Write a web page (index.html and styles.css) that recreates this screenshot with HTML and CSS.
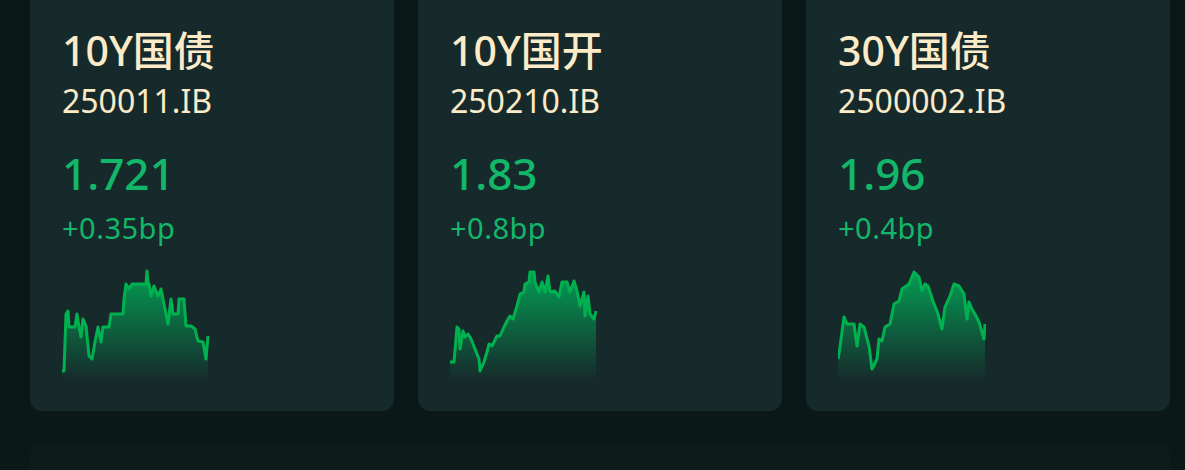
FILE: index.html
```html
<!DOCTYPE html>
<html lang="zh">
<head>
  <meta charset="UTF-8">
  <title>债券行情</title>
  <meta name="viewport" content="width=device-width, initial-scale=1.0">
  <link rel="stylesheet" href="styles.css">
</head>
<body>
  <div class="page">
    <div class="cards">
      <div class="card">
        <div class="name">10Y国债</div>
        <div class="code">250011.IB</div>
        <div class="yield">1.721</div>
        <div class="change">+0.35bp</div>
        <svg class="spark" width="148" height="112" viewBox="0 0 148 112">
          <defs>
            <linearGradient id="fill1" x1="0" y1="0" x2="0" y2="1">
              <stop offset="0" stop-color="#00b15a" stop-opacity="0.85"/>
              <stop offset="1" stop-color="#00b15a" stop-opacity="0"/>
            </linearGradient>
          </defs>
          <path fill="url(#fill1)" d="M0,102 L2,102 4,45 6,42 7,58 13,58 15,45 17,58 19,68 21,50 24,57 27,87 30,90 33,73 36,58 39,73 41,58 47,58 49,45 61,45 62,30 64,15 67,20 70,15 84,15 85,2 86,15 87,15 89,27 92,17 96,27 99,20 101,30 106,55 109,30 111,45 116,45 117,30 122,30 124,57 129,57 133,60 136,72 141,73 144,90 146,67 L146,112 L0,112 Z"/>
          <polyline class="line" points="0,102 2,102 4,45 6,42 7,58 13,58 15,45 17,58 19,68 21,50 24,57 27,87 30,90 33,73 36,58 39,73 41,58 47,58 49,45 61,45 62,30 64,15 67,20 70,15 84,15 85,2 86,15 87,15 89,27 92,17 96,27 99,20 101,30 106,55 109,30 111,45 116,45 117,30 122,30 124,57 129,57 133,60 136,72 141,73 144,90 146,67"/>
        </svg>
      </div>

      <div class="card">
        <div class="name">10Y国开</div>
        <div class="code">250210.IB</div>
        <div class="yield">1.83</div>
        <div class="change">+0.8bp</div>
        <svg class="spark" width="148" height="112" viewBox="0 0 148 112">
          <defs>
            <linearGradient id="fill2" x1="0" y1="0" x2="0" y2="1">
              <stop offset="0" stop-color="#00b15a" stop-opacity="0.85"/>
              <stop offset="1" stop-color="#00b15a" stop-opacity="0"/>
            </linearGradient>
          </defs>
          <path fill="url(#fill2)" d="M0,93 L4,93 7,58 9,60 10,80 13,62 15,68 18,65 21,70 25,80 29,90 30,102 34,93 37,83 39,75 42,77 47,67 50,67 54,58 57,52 60,47 63,50 67,37 70,25 74,23 75,15 79,13 80,3 84,3 85,13 89,23 92,13 95,23 98,7 100,23 105,22 109,28 112,13 117,13 120,23 124,12 127,22 130,37 134,23 135,47 138,27 140,45 144,50 146,42 L146,112 L0,112 Z"/>
          <polyline class="line" points="0,93 4,93 7,58 9,60 10,80 13,62 15,68 18,65 21,70 25,80 29,90 30,102 34,93 37,83 39,75 42,77 47,67 50,67 54,58 57,52 60,47 63,50 67,37 70,25 74,23 75,15 79,13 80,3 84,3 85,13 89,23 92,13 95,23 98,7 100,23 105,22 109,28 112,13 117,13 120,23 124,12 127,22 130,37 134,23 135,47 138,27 140,45 144,50 146,42"/>
        </svg>
      </div>

      <div class="card">
        <div class="name">30Y国债</div>
        <div class="code">2500002.IB</div>
        <div class="yield">1.96</div>
        <div class="change">+0.4bp</div>
        <svg class="spark" width="148" height="112" viewBox="0 0 148 112">
          <defs>
            <linearGradient id="fill3" x1="0" y1="0" x2="0" y2="1">
              <stop offset="0" stop-color="#00b15a" stop-opacity="0.85"/>
              <stop offset="1" stop-color="#00b15a" stop-opacity="0"/>
            </linearGradient>
          </defs>
          <path fill="url(#fill3)" d="M0,90 L2,78 6,48 9,55 16,55 19,77 22,55 26,58 31,77 34,100 39,90 41,70 44,72 47,58 52,55 56,35 61,32 64,20 71,15 76,3 81,8 84,22 87,15 90,17 95,32 100,45 104,60 107,38 112,27 116,15 121,17 126,25 129,50 131,33 134,40 137,45 141,53 146,70 147,55 L147,112 L0,112 Z"/>
          <polyline class="line" points="0,90 2,78 6,48 9,55 16,55 19,77 22,55 26,58 31,77 34,100 39,90 41,70 44,72 47,58 52,55 56,35 61,32 64,20 71,15 76,3 81,8 84,22 87,15 90,17 95,32 100,45 104,60 107,38 112,27 116,15 121,17 126,25 129,50 131,33 134,40 137,45 141,53 146,70 147,55"/>
        </svg>
      </div>
    </div>

    <div class="panel"></div>
  </div>
</body>
</html>
```

FILE: styles.css
```css
body { margin: 0; background: #0a1817; font-family: "Noto Sans", "Noto Sans CJK SC", sans-serif; }
.page { padding: 0 15px 0 30px; }

.cards { display: grid; grid-template-columns: repeat(3, 1fr); gap: 24px; margin-top: -20px; }
.card { background: #162a2b; border-radius: 12px; padding: 46px 32px 30px; }

.name { font-size: 41px; line-height: 48px; font-weight: 500; color: #fcebc9; }
.code { font-size: 32px; line-height: 54px; color: #fcebc9; }
.yield { font-size: 44px; line-height: 58px; margin-top: 16px; font-weight: 500; color: #12b76a; }
.change { font-size: 29px; line-height: 48px; letter-spacing: 0.5px; margin-top: 2px; color: #12b76a; }

.spark { display: block; margin-top: 17px; }
.spark .line { fill: none; stroke: #00b14f; stroke-width: 3; stroke-linejoin: round; }

.panel { margin-top: 31px; height: 60px; background: #0d1b1a; border-radius: 12px; }
```
